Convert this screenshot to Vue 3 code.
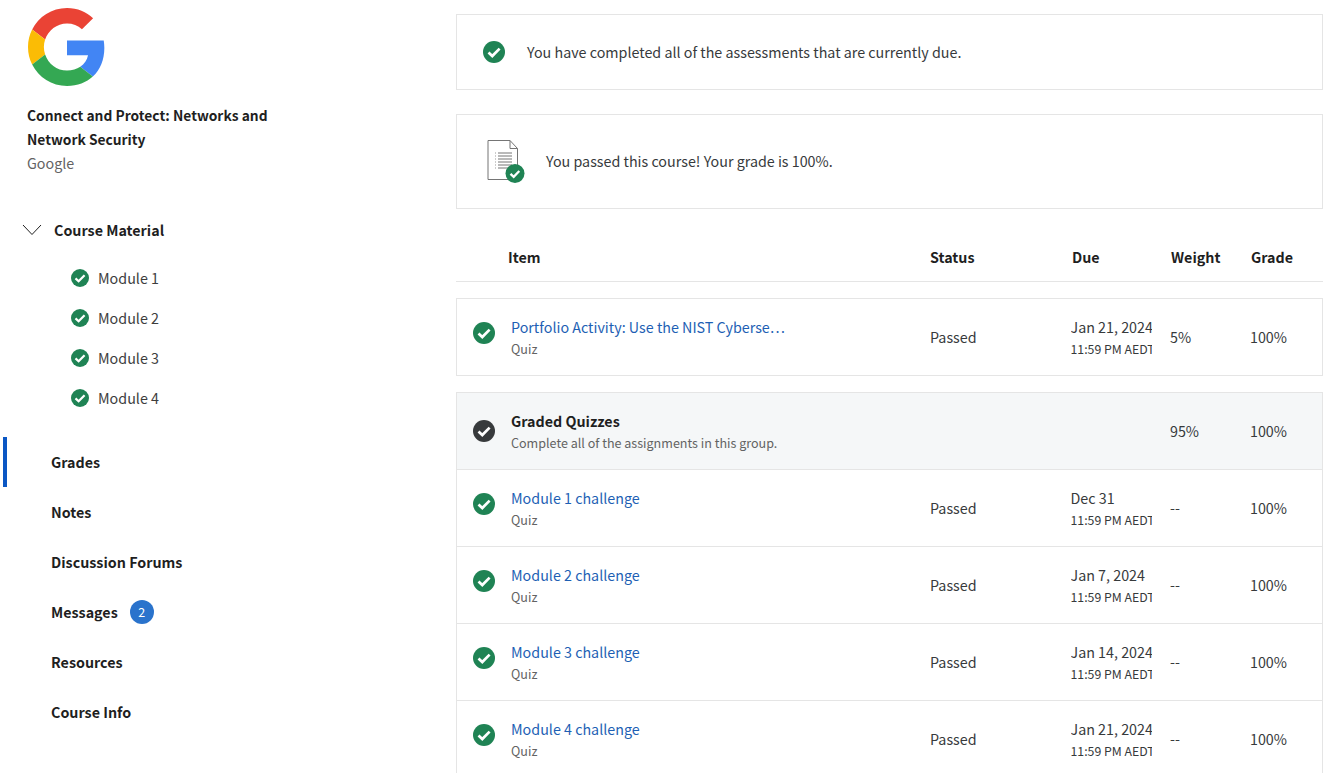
<template>
  <div class="page">
    <aside class="sidebar">
      <svg class="logo" viewBox="0 0 48 48" width="78" height="78">
        <path fill="#EA4335" d="M24 9.5c3.54 0 6.71 1.22 9.21 3.6l6.85-6.85C35.9 2.38 30.47 0 24 0 14.62 0 6.51 5.38 2.56 13.22l7.98 6.19C12.43 13.72 17.74 9.5 24 9.5z"/>
        <path fill="#4285F4" d="M46.98 24.55c0-1.57-.15-3.09-.38-4.55H24v9.02h12.94c-.58 2.96-2.26 5.48-4.78 7.18l7.73 6c4.51-4.18 7.09-10.36 7.09-17.65z"/>
        <path fill="#FBBC05" d="M10.53 28.59c-.48-1.45-.76-2.99-.76-4.59s.27-3.14.76-4.59l-7.98-6.19C.92 16.46 0 20.12 0 24c0 3.88.92 7.54 2.56 10.78l7.97-6.19z"/>
        <path fill="#34A853" d="M24 48c6.48 0 11.93-2.13 15.89-5.81l-7.73-6c-2.15 1.45-4.92 2.3-8.16 2.3-6.26 0-11.57-4.22-13.47-9.91l-7.98 6.19C6.51 42.62 14.62 48 24 48z"/>
      </svg>
      <div class="course-title">Connect and Protect: Networks and Network Security</div>
      <div class="partner">Google</div>

      <div class="material-head">
        <svg class="chevron" viewBox="0 0 20 12" width="20" height="12">
          <path d="M1 1l9 9.5L19 1" fill="none" stroke="#1f1f1f" stroke-width="1"/>
        </svg>
        <span>Course Material</span>
      </div>
      <ul class="modules">
        <li v-for="m in modules" :key="m" class="module">
          <svg class="check" viewBox="0 0 22 22" width="18" height="18">
            <circle cx="11" cy="11" r="11" fill="#1f8354"/>
            <path d="M5.5 11.4l3.8 3.6L16.6 7.6" fill="none" stroke="#fff" stroke-width="2.7"/>
          </svg>
          <span>{{ m }}</span>
        </li>
      </ul>

      <nav class="nav">
        <div v-for="n in navItems" :key="n" class="nav-item" :class="{ 'nav-active': n === 'Grades' }">
          <span>{{ n }}</span>
          <span v-if="n === 'Messages'" class="badge">2</span>
        </div>
      </nav>
    </aside>

    <main class="main">
      <div class="notice notice-due">
        <svg class="check" viewBox="0 0 22 22" width="22" height="22">
          <circle cx="11" cy="11" r="11" fill="#1f8354"/>
          <path d="M5.5 11.4l3.8 3.6L16.6 7.6" fill="none" stroke="#fff" stroke-width="2.7"/>
        </svg>
        <span>You have completed all of the assessments that are currently due.</span>
      </div>

      <div class="notice notice-pass">
        <svg class="doc" viewBox="0 0 38 44" width="38" height="44">
          <path d="M1 .5h22l7.5 8V39.500H1z" fill="#fff" stroke="#757575" stroke-width="1"/>
          <path d="M23 .5v8h7.500" fill="none" stroke="#757575" stroke-width="1"/>
          <path d="M11 13h14M11 16h14M11 19h14M11 22h14M11 25h14M11 28h10" stroke="#757575" stroke-width="1"/>
          <path d="M8 13h1M8 16h1M8 19h1M8 22h1M8 25h1M8 28h1" stroke="#9a9a9a" stroke-width="1"/>
          <circle cx="28" cy="33.500" r="9.500" fill="#1f8354"/>
          <path d="M23.500 33.800l3.200 3 5.600-5.800" fill="none" stroke="#fff" stroke-width="2.300"/>
        </svg>
        <span class="pass-text">You passed this course! Your grade is 100%.</span>
      </div>

      <div class="table-head">
        <div class="head-item">Item</div>
        <div class="head-status">Status</div>
        <div class="head-due">Due</div>
        <div class="head-weight">Weight</div>
        <div>Grade</div>
      </div>

      <div class="row row-single">
        <svg class="check row-check" viewBox="0 0 22 22" width="22" height="22">
          <circle cx="11" cy="11" r="11" fill="#1f8354"/>
          <path d="M5.5 11.4l3.8 3.6L16.6 7.6" fill="none" stroke="#fff" stroke-width="2.7"/>
        </svg>
        <div class="col-item">
          <div class="item-link">Portfolio Activity: Use the NIST Cyberse…</div>
          <div class="item-sub">Quiz</div>
        </div>
        <div class="col-status">Passed</div>
        <div class="col-due">
          <div class="due-date">Jan 21, 2024</div>
          <div class="due-time">11:59 PM AEDT</div>
        </div>
        <div class="col-weight">5%</div>
        <div class="col-grade">100%</div>
      </div>

      <div class="group">
        <div class="row row-group">
          <svg class="check group-check" viewBox="0 0 22 22" width="22" height="22">
            <circle cx="11" cy="11" r="11" fill="#373a3c"/>
            <path d="M5.5 11.4l3.8 3.6L16.6 7.6" fill="none" stroke="#fff" stroke-width="2.7"/>
          </svg>
          <div class="col-item">
            <div class="group-title">Graded Quizzes</div>
            <div class="item-sub">Complete all of the assignments in this group.</div>
          </div>
          <div class="col-status"></div>
          <div class="col-due"></div>
          <div class="col-weight">95%</div>
          <div class="col-grade">100%</div>
        </div>
        <div v-for="q in quizzes" :key="q.name" class="row row-quiz">
          <svg class="check row-check" viewBox="0 0 22 22" width="22" height="22">
            <circle cx="11" cy="11" r="11" fill="#1f8354"/>
            <path d="M5.5 11.4l3.8 3.6L16.6 7.6" fill="none" stroke="#fff" stroke-width="2.7"/>
          </svg>
          <div class="col-item">
            <div class="item-link">{{ q.name }}</div>
            <div class="item-sub">Quiz</div>
          </div>
          <div class="col-status">Passed</div>
          <div class="col-due">
            <div class="due-date">{{ q.due }}</div>
            <div class="due-time">11:59 PM AEDT</div>
          </div>
          <div class="col-weight">--</div>
          <div class="col-grade">100%</div>
        </div>
      </div>
    </main>
  </div>
</template>

<script setup>
const modules = ['Module 1', 'Module 2', 'Module 3', 'Module 4']
const navItems = ['Grades', 'Notes', 'Discussion Forums', 'Messages', 'Resources', 'Course Info']
const quizzes = [
  { name: 'Module 1 challenge', due: 'Dec 31' },
  { name: 'Module 2 challenge', due: 'Jan 7, 2024' },
  { name: 'Module 3 challenge', due: 'Jan 14, 2024' },
  { name: 'Module 4 challenge', due: 'Jan 21, 2024' }
]
</script>

<style scoped>
.page {
  display: flex;
  height: 773px;
  overflow: hidden;
  background: #fff;
  color: #1f1f1f;
  font-family: "Noto Sans CJK SC", "Noto Sans", sans-serif;
  font-size: 14.3px;
  line-height: 24px;
}

.sidebar {
  width: 456px;
  flex: none;
  padding-top: 8px;
  box-sizing: border-box;
}

.logo {
  display: block;
  margin-left: 28px;
}

.course-title {
  width: 250px;
  margin: 17px 0 0 27px;
  font-size: 13.8px;
  font-weight: 700;
}

.partner {
  margin-left: 27px;
  color: #636363;
}

.material-head {
  display: flex;
  align-items: center;
  gap: 12px;
  margin: 43px 0 0 22px;
  font-weight: 700;
}

.modules {
  list-style: none;
  margin: 16px 0 0;
  padding: 0 0 0 71px;
}

.module {
  display: flex;
  align-items: center;
  gap: 9px;
  height: 40px;
  color: #3d3d3d;
}

.nav {
  margin-top: 19px;
}

.nav-item {
  display: flex;
  align-items: center;
  gap: 12px;
  height: 50px;
  margin-left: 3px;
  padding-left: 48px;
  border-left: 0 solid #0b57c4;
  font-weight: 700;
}

.nav-active {
  padding-left: 44px;
  border-left-width: 4px;
}

.badge {
  width: 24px;
  height: 24px;
  border-radius: 50%;
  background: #2a73cc;
  color: #fff;
  font-size: 12.5px;
  font-weight: 400;
  text-align: center;
}

.main {
  width: 867px;
  flex: none;
  padding-top: 14px;
}

.notice {
  display: flex;
  align-items: center;
  box-sizing: border-box;
  border: 1px solid #e5e5e5;
  color: #373a3c;
}

.notice-due {
  height: 76px;
  padding-left: 26px;
  gap: 22px;
}

.notice-pass {
  height: 95px;
  margin-top: 24px;
  padding-left: 30px;
  gap: 21px;
}

.pass-text {
  margin-bottom: 2px;
}

.table-head {
  display: flex;
  align-items: center;
  height: 73px;
  padding: 23px 0 0 16px;
  box-sizing: border-box;
  border-bottom: 1px solid #e5e5e5;
  font-weight: 700;
  margin-bottom: 16px;
}

.head-item {
  padding-left: 36px;
  width: 458px;
  box-sizing: border-box;
}

.head-status {
  width: 142px;
}

.head-due {
  width: 99px;
}

.head-weight {
  width: 80px;
}

.row {
  display: flex;
  align-items: center;
  box-sizing: border-box;
  height: 77px;
  padding-left: 16px;
  border-bottom: 1px solid #e5e5e5;
  color: #373a3c;
}

.row-single {
  height: 78px;
  border: 1px solid #e5e5e5;
}

.group {
  margin-top: 16px;
  border: 1px solid #e5e5e5;
  border-bottom: 0;
}

.row-group {
  background: #f5f7f8;
}

.row-check {
  flex: none;
  margin: 0 16px 8px 0;
}

.group-check {
  flex: none;
  margin-right: 16px;
}

.col-item {
  width: 419px;
  flex: none;
}

.col-status {
  width: 140.5px;
  flex: none;
}

.col-due {
  width: 81.5px;
  flex: none;
  margin-right: 18px;
  overflow: hidden;
}

.col-weight {
  width: 80px;
  flex: none;
}

.item-link {
  color: #1e5fb4;
}

.item-sub {
  font-size: 12.55px;
  line-height: 20px;
  color: #636363;
}

.group-title {
  font-weight: 700;
  color: #1f1f1f;
}

.due-date {
  white-space: nowrap;
}

.due-time {
  font-size: 12.3px;
  line-height: 20px;
  white-space: nowrap;
}
</style>

<style>
html, body {
  margin: 0;
  background: #fff;
}
</style>
